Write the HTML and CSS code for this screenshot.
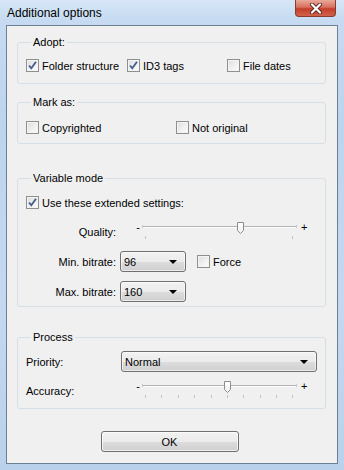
FILE: index.html
```html
<!DOCTYPE html>
<html lang="en">
<head>
  <meta charset="UTF-8">
  <title>Additional options</title>
  <link rel="stylesheet" href="styles.css">
</head>
<body>
  <div class="window">
    <div class="titlebar">
      <span class="title">Additional options</span>
      <span class="close">
        <svg width="14" height="11" viewBox="0 0 14 11">
          <path d="M3 1.5 L11 9.5 M11 1.5 L3 9.5" stroke="#5a2a24" stroke-width="4" stroke-linecap="round"/>
          <path d="M3 1.5 L11 9.5 M11 1.5 L3 9.5" stroke="#fff" stroke-width="2.2" stroke-linecap="round"/>
        </svg>
      </span>
    </div>
    <div class="client">
      <fieldset class="group adopt">
        <legend>Adopt:</legend>
        <div class="checks adopt-cols">
          <label class="check"><span class="box on"></span>Folder structure</label>
          <label class="check"><span class="box on"></span>ID3 tags</label>
          <label class="check"><span class="box"></span>File dates</label>
        </div>
      </fieldset>

      <fieldset class="group mark">
        <legend>Mark as:</legend>
        <div class="checks mark-cols">
          <label class="check"><span class="box"></span>Copyrighted</label>
          <label class="check"><span class="box"></span>Not original</label>
        </div>
      </fieldset>

      <fieldset class="group variable">
        <legend>Variable mode</legend>
        <label class="check use-ext"><span class="box on"></span>Use these extended settings:</label>
        <div class="form-grid">
          <span class="lbl slider-lbl">Quality:</span>
          <div class="slider">
            <span class="sign">-</span>
            <svg class="track" width="158" height="22" viewBox="0 0 158 22">
              <rect x="1" y="6" width="153" height="1" fill="#b4b4b4"/>
              <rect x="1" y="7" width="153" height="1" fill="#fdfdfd"/>
              <rect x="0" y="5" width="1" height="3" fill="#c8c8c8"/>
              <rect x="154" y="5" width="1" height="3" fill="#c8c8c8"/>
              <rect x="3" y="16" width="1" height="3" fill="#c0c0c0"/>
              <rect x="150" y="16" width="1" height="3" fill="#c0c0c0"/>
              <path d="M95.5 2.5 h6 v8 l-3 3 l-3 -3 z" fill="#f4f4f4" stroke="#8c8c8c"/>
              <rect x="96" y="3" width="5" height="4" fill="#fff"/>
            </svg>
            <span class="sign">+</span>
          </div>

          <span class="lbl">Min. bitrate:</span>
          <div class="inline">
            <div class="combo small"><span>96</span><i class="arrow"></i></div>
            <label class="check force"><span class="box"></span>Force</label>
          </div>

          <span class="lbl">Max. bitrate:</span>
          <div class="inline">
            <div class="combo small"><span>160</span><i class="arrow"></i></div>
          </div>
        </div>
      </fieldset>

      <fieldset class="group process">
        <legend>Process</legend>
        <div class="proc-grid">
          <span class="plbl">Priority:</span>
          <div class="combo wide"><span>Normal</span><i class="arrow"></i></div>

          <span class="plbl slider-lbl">Accuracy:</span>
          <div class="slider">
            <span class="sign">-</span>
            <svg class="track" width="158" height="22" viewBox="0 0 158 22">
              <rect x="1" y="6" width="153" height="1" fill="#b4b4b4"/>
              <rect x="1" y="7" width="153" height="1" fill="#fdfdfd"/>
              <rect x="0" y="5" width="1" height="3" fill="#c8c8c8"/>
              <rect x="154" y="5" width="1" height="3" fill="#c8c8c8"/>
              <g fill="#c0c0c0">
                <rect x="3" y="16" width="1" height="3"/>
                <rect x="19" y="16" width="1" height="3"/>
                <rect x="36" y="16" width="1" height="3"/>
                <rect x="52" y="16" width="1" height="3"/>
                <rect x="69" y="16" width="1" height="3"/>
                <rect x="85" y="16" width="1" height="3"/>
                <rect x="101" y="16" width="1" height="3"/>
                <rect x="118" y="16" width="1" height="3"/>
                <rect x="134" y="16" width="1" height="3"/>
                <rect x="150" y="16" width="1" height="3"/>
              </g>
              <path d="M82.5 2.5 h6 v8 l-3 3 l-3 -3 z" fill="#f4f4f4" stroke="#8c8c8c"/>
              <rect x="83" y="3" width="5" height="4" fill="#fff"/>
            </svg>
            <span class="sign">+</span>
          </div>
        </div>
      </fieldset>

      <div class="actions">
        <button class="btn">OK</button>
      </div>
    </div>
  </div>
</body>
</html>
```

FILE: styles.css
```css
html, body {
  margin: 0;
  padding: 0;
}
body {
  font-family: "Liberation Sans", Arial, sans-serif;
  font-size: 11px;
  color: #000;
}
.window {
  width: 344px;
  height: 470px;
  box-sizing: border-box;
  display: flex;
  flex-direction: column;
  padding: 0 6px 6px;
  background: linear-gradient(180deg, #d6e6f7 0px, #c6dbf1 20px, #bdd4ee 120px, #c4d9f0 300px, #b9d1ea 470px);
}
.titlebar {
  height: 25px;
  display: flex;
  align-items: flex-start;
  justify-content: space-between;
}
.title {
  font-size: 12px;
  line-height: 14px;
  margin: 6px 0 0 1px;
}
.close {
  width: 41px;
  height: 17px;
  margin-right: 2px;
  box-sizing: border-box;
  border: 1px solid #8a3b30;
  border-top: none;
  border-radius: 0 0 4px 4px;
  background: linear-gradient(180deg, #e9a99a 0%, #d8705d 45%, #c33e28 55%, #d0624c 100%);
  display: flex;
  align-items: center;
  justify-content: center;
}
.close svg {
  display: block;
}
.client {
  flex: 1;
  background: #f0f0f0;
  border: 1px solid #6d7f94;
  padding: 9px 11px 0 10px;
  display: flex;
  flex-direction: column;
}
.group {
  margin: 0;
  min-width: 0;
  border: 1px solid #d5dfe5;
  border-radius: 3px;
  padding: 0 8px;
}
.group legend {
  padding: 0 2px;
  margin-left: 5px;
  line-height: 14px;
}
.adopt {
  padding-top: 9px;
  padding-bottom: 10px;
}
.mark {
  margin-top: 11px;
  padding-top: 11px;
  padding-bottom: 8px;
}
.variable {
  margin-top: 27px;
  padding-top: 10px;
  padding-bottom: 4px;
}
.process {
  margin-top: 23px;
  padding-top: 7px;
  padding-bottom: 7px;
}
.checks {
  display: grid;
}
.adopt-cols {
  grid-template-columns: 101px 100px auto;
}
.mark-cols {
  grid-template-columns: 150px auto;
}
.check {
  display: flex;
  align-items: center;
  height: 15px;
  line-height: 14px;
  white-space: nowrap;
}
.box {
  width: 13px;
  height: 13px;
  box-sizing: border-box;
  border: 1px solid #8e8f8f;
  margin-right: 3px;
  flex: none;
  background: linear-gradient(135deg, #dcdcdc 0%, #f2f2f2 60%, #fbfbfb 100%);
  box-shadow: inset 0 0 0 1px #f4f4f4;
}
.box.on {
  background-color: #f4f4f4;
  background-image: url("data:image/svg+xml;utf8,<svg xmlns='http://www.w3.org/2000/svg' width='11' height='11' viewBox='0 0 11 11'><path d='M2 5.5 L4.3 8.3 L9 1.8' fill='none' stroke='%234a5f8e' stroke-width='1.9'/></svg>"), linear-gradient(135deg, #dcdcdc 0%, #f2f2f2 60%, #fbfbfb 100%);
  background-repeat: no-repeat;
  background-position: center;
}
.form-grid {
  display: grid;
  grid-template-columns: 90px auto;
  column-gap: 4px;
  grid-template-rows: 22px 21px 21px;
  row-gap: 9px;
  margin-top: 10px;
  align-items: center;
}
.lbl {
  text-align: right;
  line-height: 14px;
}
.slider-lbl {
  align-self: start;
  margin-top: 5px;
}
.slider {
  display: flex;
  align-items: flex-start;
  height: 22px;
}
.sign {
  line-height: 14px;
  width: 12px;
  text-align: right;
  margin-left: 8px;
  padding-right: 5px;
}
.slider .sign:last-child {
  text-align: left;
  margin-left: 0;
  width: auto;
  padding: 0;
}
.track {
  display: block;
  margin: 0 1px 0 1px;
}
.sign + .track {
  margin-left: -3px;
}
.inline {
  display: flex;
  align-items: center;
}
.combo {
  height: 21px;
  box-sizing: border-box;
  border: 1px solid #707070;
  border-radius: 3px;
  background: linear-gradient(180deg, #f2f2f2 0%, #ebebeb 50%, #dddddd 51%, #cfcfcf 100%);
  display: flex;
  align-items: center;
  justify-content: space-between;
  padding: 0 8px 0 3px;
  line-height: 14px;
  box-shadow: inset 0 0 0 1px rgba(255,255,255,0.6);
}
.combo.small {
  width: 66px;
}
.arrow {
  width: 0;
  height: 0;
  border-left: 4px solid transparent;
  border-right: 4px solid transparent;
  border-top: 4px solid #000;
}
.force {
  margin-left: 11px;
}
.proc-grid {
  display: grid;
  grid-template-columns: 95px 196px;
  grid-template-rows: 21px 22px;
  row-gap: 7px;
  align-items: center;
}
.plbl {
  line-height: 14px;
}
.process .slider .sign:first-child {
  margin-left: 7px;
}
.actions {
  display: flex;
  justify-content: center;
  margin-top: 22px;
  padding-right: 4px;
}
.btn {
  width: 138px;
  height: 21px;
  font-family: inherit;
  font-size: 11px;
  color: #000;
  border: 1px solid #707070;
  border-radius: 3px;
  background: linear-gradient(180deg, #f2f2f2 0%, #ebebeb 50%, #dddddd 51%, #cfcfcf 100%);
  box-shadow: inset 0 0 0 1px rgba(255,255,255,0.7);
  padding: 0;
}
```
